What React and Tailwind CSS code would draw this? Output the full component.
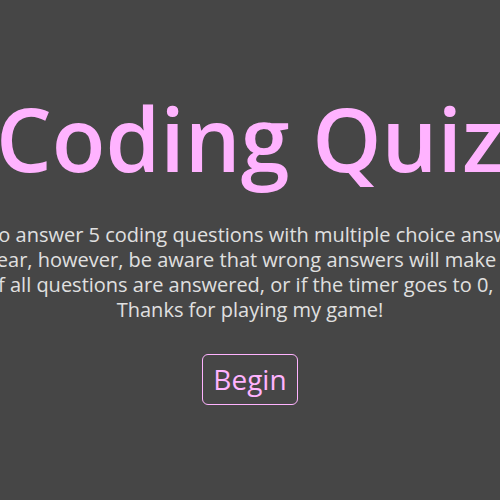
import React from "react";

export default function App() {
    const lines = [
        { text: "Try to answer 5 coding questions with multiple choice answers.", pad: "" },
        { text: "Appear, however, be aware that wrong answers will make it so", pad: "" },
        { text: "If all questions are answered, or if the timer goes to 0,", pad: "pr-[14px]" },
        { text: "Thanks for playing my game!", pad: "" },
    ];

    return (
        <div
            className="min-h-[500px] w-full bg-[#464646] flex flex-col items-center overflow-hidden"
            style={{ fontFamily: '"Open Sans", sans-serif' }}
        >
            <h1 className="mt-[93px] text-[88px] leading-[90px] font-semibold text-[#ffb3ff] whitespace-nowrap">Coding Quiz</h1>
            <div className="mt-[39px] text-center text-[20px] leading-[25px] text-[#e0e0e0]">
                {lines.map((line) => (
                    <p key={line.text} className={`whitespace-nowrap ${line.pad}`}>{line.text}</p>
                ))}
            </div>
            <button className="mt-[32px] px-[10px] py-[5px] leading-[39px] border border-[#ffb3ff] rounded-[6px] text-[28px] text-[#ffb3ff]">
                Begin
            </button>
        </div>
    );
}
